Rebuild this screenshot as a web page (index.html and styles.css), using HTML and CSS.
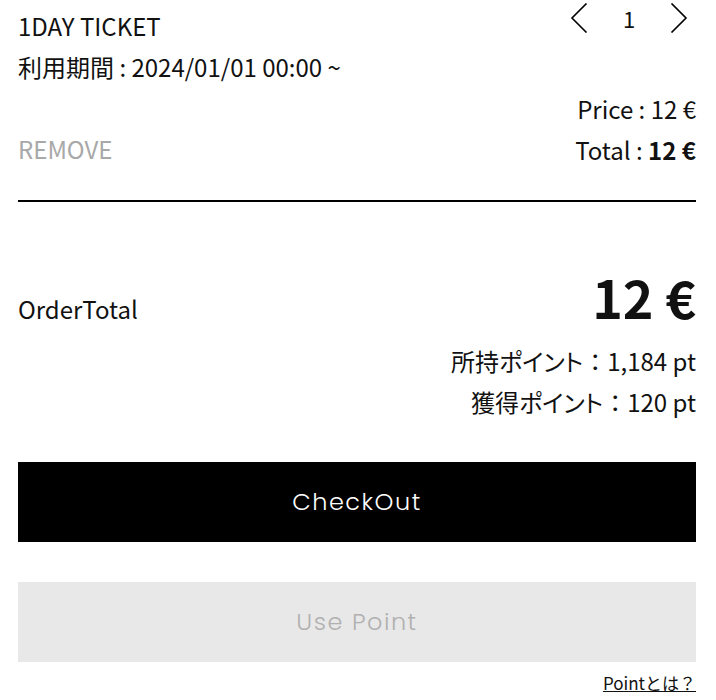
FILE: index.html
```html
<!DOCTYPE html>
<html lang="ja">
<head>
<meta charset="utf-8">
<title>Cart</title>
<link rel="stylesheet" href="styles.css">
</head>
<body>
<main class="cart">
  <section class="item">
    <div class="item-info">
      <div class="item-name">1DAY TICKET</div>
      <div class="item-period">利用期間 : 2024/01/01 00:00 ~</div>
      <div class="item-spacer"></div>
      <div class="item-remove">REMOVE</div>
    </div>
    <div class="item-side">
      <div class="qty">
        <button class="qty-btn" aria-label="decrease">
          <svg width="18" height="30" viewBox="0 0 18 30"><polyline points="16.5,0.5 2,15 16.5,29.5" fill="none" stroke="#000" stroke-width="1.6"/></svg>
        </button>
        <span class="qty-num">1</span>
        <button class="qty-btn" aria-label="increase">
          <svg width="18" height="30" viewBox="0 0 18 30"><polyline points="1.5,0.5 16,15 1.5,29.5" fill="none" stroke="#000" stroke-width="1.6"/></svg>
        </button>
      </div>
      <div class="price">Price : 12 €</div>
      <div class="total">Total : <b>12 €</b></div>
    </div>
  </section>

  <section class="summary">
    <div class="order-row">
      <span class="order-label">OrderTotal</span>
      <span class="order-amount">12 €</span>
    </div>
    <div class="points">
      <div><span class="jp">所持ポイント</span>：1,184 pt</div>
      <div><span class="jp">獲得ポイント</span>：120 pt</div>
    </div>
  </section>

  <div class="actions">
    <button class="btn btn-checkout">CheckOut</button>
    <button class="btn btn-point">Use Point</button>
    <a class="point-link" href="#">Pointとは？</a>
  </div>
</main>
</body>
</html>
```
FILE: styles.css
```css
html, body {
  margin: 0;
  padding: 0;
  background: #fff;
}
body {
  font-family: "Noto Sans CJK JP", "Noto Sans", sans-serif;
  color: #111;
  font-size: 24px;
  line-height: 41px;
}
.jp {
  font-feature-settings: "palt";
}
.cart {
  padding: 3px 20px 0 18px;
}
.item {
  display: flex;
  justify-content: space-between;
  padding-bottom: 30px;
  border-bottom: 2px solid #000;
}
.item-info {
  padding-top: 2px;
}
.item-spacer {
  height: 41px;
}
.item-remove {
  color: #a8a8a8;
}
.item-side {
  display: flex;
  flex-direction: column;
  align-items: flex-end;
}
.qty {
  display: flex;
  align-items: center;
  height: 30px;
  margin-right: 8px;
  margin-bottom: 55px;
}
.qty-btn {
  border: 0;
  background: none;
  padding: 0;
  width: 18px;
  height: 30px;
  display: flex;
}
.qty-num {
  width: 82px;
  text-align: center;
  font-size: 22px;
  line-height: 30px;
}
.total b {
  font-weight: 700;
}
.summary {
  margin-top: 56px;
}
.order-row {
  display: flex;
  justify-content: space-between;
  align-items: baseline;
}
.order-amount {
  font-size: 52px;
  font-weight: 700;
  line-height: 78px;
}
.points {
  margin-top: 4px;
  text-align: right;
}
.actions {
  margin-top: 40px;
  display: flex;
  flex-direction: column;
  gap: 40px;
}
.btn {
  display: block;
  width: 100%;
  height: 80px;
  border: 0;
  padding: 0 0 2px;
  font-family: "Poppins", "Lato", sans-serif;
  font-weight: 300;
  font-size: 24px;
  letter-spacing: 1.5px;
}
.btn-checkout {
  background: #000;
  color: #fff;
}
.btn-point {
  background: #e8e8e8;
  color: #b0b0b0;
}
.point-link {
  align-self: flex-end;
  margin-top: -32px;
  color: #111;
  font-size: 17px;
  line-height: 26px;
  text-decoration: underline;
}
```
